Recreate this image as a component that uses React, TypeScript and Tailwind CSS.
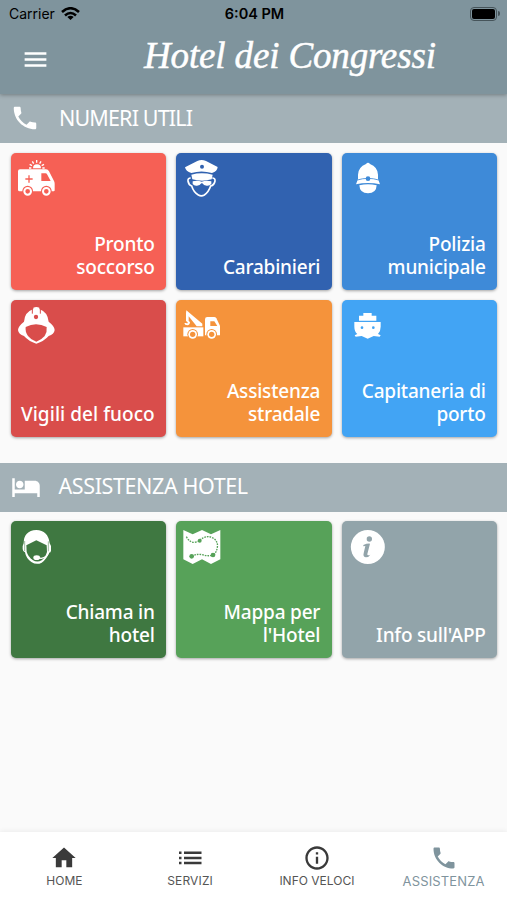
import type { ReactNode } from "react";
import { MdMenu, MdPhone, MdHotel, MdHome, MdInfoOutline } from "react-icons/md";

function CardIcon({ children }: { children: ReactNode }) {
  return (
    <svg viewBox="0 0 111 111" className="w-[37px] h-[37px] overflow-visible" fill="currentColor">
      {children}
    </svg>
  );
}

const AmbulanceIcon = ({ bg }: { bg: string }) => (
  <CardIcon>
    <path d="M45 25a12 12 0 0 1 24 0z" />
    <path d="M56 0v8M43 4l4 7M69 4l-4 7M35 13l7 4M78 13l-7 4M33 24h7M73 24h7" stroke="currentColor" strokeWidth="4" />
    <path d="M6 28H84q6 0 9 6l15 29q2 4 2 8v20q0 3-3 3H5q-5 0-5-5V34q0-6 6-6z" />
    <path d="M70 40h12q4 0 6 4l10 19H70z" fill={bg} />
    <path d="M33 46v22M22 57h22" stroke={bg} strokeWidth="4" />
    <circle cx="29" cy="93" r="16" fill={bg} /><circle cx="29" cy="94" r="10" fill="none" stroke="currentColor" strokeWidth="6" />
    <circle cx="85" cy="93" r="16" fill={bg} /><circle cx="85" cy="94" r="10" fill="none" stroke="currentColor" strokeWidth="6" />
  </CardIcon>
);

const OfficerIcon = ({ bg }: { bg: string }) => (
  <CardIcon>
    <path d="M6 22L43 3q13-6 26 0l35 18q-1 13-17 18Q55 30 25 39 8 34 6 22z" />
    <circle cx="57" cy="20" r="6" fill={bg} />
    <path d="M25 44q31-8 64 0l-3 14q-29 8-58 0z" />
    <path d="M23 54q-9 0-8 9 2 12 11 15 6 19 20 27 9 5 18 0 13-9 19-27 11-3 13-15 1-9-8-9" fill="none" stroke="currentColor" strokeWidth="5" />
    <path d="M29 64q14-4 27 1 14-5 29-1v8q-5 6-14 5-9 0-13-7h-3q-4 7-13 7-9 1-13-5z" />
  </CardIcon>
);

const PoliceHelmetIcon = ({ bg }: { bg: string }) => (
  <CardIcon>
    <path d="M51 12q6-8 12 0 23 9 24 32v13H27V44q1-23 24-32z" />
    <path d="M27 57h60l6 16q-36-8-72 0z" />
    <path d="M25 60q32-10 64 0" fill="none" stroke={bg} strokeWidth="2.500" />
    <circle cx="57" cy="56" r="7" fill={bg} />
    <path d="M31 76q26-6 52 0-1 24-26 24T31 76z" />
  </CardIcon>
);

const FirefighterIcon = ({ bg }: { bg: string }) => (
  <CardIcon>
    <path d="M18 44q2-29 28-38V2q9-4 18 0v4q25 9 28 38 18 14 18 25-2 14-18 18-14 16-37 23Q32 103 18 87 2 83 0 69q0-11 18-25z" />
    <path d="M23 60q31-16 63 0 2 14-6 27-10 12-25 17-16-5-25-17-9-13-7-27z" fill={bg} />
    <circle cx="54" cy="30" r="6.500" fill={bg} />
    <path d="M43 6v14M67 6v14" stroke={bg} strokeWidth="3" />
  </CardIcon>
);

const TowTruckIcon = ({ bg }: { bg: string }) => (
  <CardIcon>
    <path d="M10 10l48 40v8H41L17 28v14l4 3q0 9-8 10-8 0-9-7h5q6 3 5-2l-5-4V19z" />
    <path d="M1 61h60v27H1z" />
    <path d="M66 37q0-7 7-7h20q5 0 7 4l11 22v29h-6H66z" />
    <path d="M82 43h12l9 14H82z" fill={bg} />
    <circle cx="29" cy="82" r="16" fill={bg} /><circle cx="29" cy="82" r="13" />
    <circle cx="86" cy="82" r="16" fill={bg} /><circle cx="86" cy="82" r="13" />
    <circle cx="29" cy="82" r="8" fill={bg} /><circle cx="86" cy="82" r="8" fill={bg} />
  </CardIcon>
);

const ShipIcon = ({ bg }: { bg: string }) => (
  <CardIcon>
    <path d="M43 18h25v8h14v15H30V26h13z" />
    <path d="M16 45h79v14q0 14-8 22l8 4-3 4-18-2-18 8-18-8-18 2-3-4 8-4q-9-8-9-22z" />
    <circle cx="39" cy="62" r="4" fill={bg} /><circle cx="73" cy="62" r="4" fill={bg} />
  </CardIcon>
);

const HeadsetIcon = ({ bg }: { bg: string }) => (
  <CardIcon>
    <path d="M17 46q0-38 38-40 35 1 40 40l4 8v14q0 6-7 7-5 18-21 29-15 8-31-2-16-11-19-29-7-3-7-10V54z" />
    <path d="M25 52l30-15 31 15 1 20q-5 17-16 25-14 8-27-1-14-10-18-25z" fill={bg} />
    <path d="M92 74q-4 13-22 17l-9-1" fill="none" stroke="currentColor" strokeWidth="4" />
    <ellipse cx="56" cy="89" rx="10" ry="7" />
    <path d="M20 39v30M91 40v30" stroke={bg} strokeWidth="1.500" />
  </CardIcon>
);

const MapIcon = ({ bg }: { bg: string }) => (
  <CardIcon>
    <path d="M1 6l28 13L57 6l27 13L112 6v88l-28 14-27-14-28 14L1 94z" />
    <path d="M10 26q9 17 24 17 12-1 18-8 20-15 38-5 16 10 13 28-2 14-12 25" fill="none" stroke={bg} strokeWidth="4" strokeDasharray="5 3" />
    <path d="M26 84q19-8 36-3 14 4 26 1" fill="none" stroke={bg} strokeWidth="4" strokeDasharray="5 3" />
    <circle cx="50" cy="38" r="6" fill={bg} /><circle cx="26" cy="85" r="7" fill={bg} /><circle cx="90" cy="81" r="7" fill={bg} />
  </CardIcon>
);

const InfoIcon = ({ bg }: { bg: string }) => (
  <CardIcon>
    <circle cx="56.500" cy="57" r="51" />
    <circle cx="61" cy="33" r="8" fill={bg} />
    <path d="M43 51q12-5 20-4l-8 31q-1 6 9 2-5 8-13 8-10-1-7-12l5-22-6 1z" fill={bg} />
  </CardIcon>
);

const ListIcon = () => (
  <svg viewBox="0 0 28 28" className="w-7 h-7" fill="currentColor">
    <path d="M3 7.500h2.500V10H3zM3 12.700h2.500v2.500H3zM3 17.700h2.500v2.500H3zM8 7.500h17.500V10H8zM8 12.700h17.500v2.500H8zM8 17.700h17.500v2.500H8z" />
  </svg>
);

const emergency = [
  { label: "Pronto soccorso", bg: "#f66055", card: "bg-[#f66055]", Icon: AmbulanceIcon },
  { label: "Carabinieri", bg: "#3162b0", card: "bg-[#3162b0]", Icon: OfficerIcon },
  { label: "Polizia municipale", bg: "#3e8ad8", card: "bg-[#3e8ad8]", Icon: PoliceHelmetIcon },
  { label: "Vigili del fuoco", bg: "#d94d4b", card: "bg-[#d94d4b] tracking-[0.05px]", Icon: FirefighterIcon },
  { label: "Assistenza stradale", bg: "#f5933b", card: "bg-[#f5933b]", Icon: TowTruckIcon },
  { label: "Capitaneria di porto", bg: "#42a4f4", card: "bg-[#42a4f4]", Icon: ShipIcon },
];

const hotel = [
  { label: "Chiama in hotel", bg: "#3f7841", card: "bg-[#3f7841]", Icon: HeadsetIcon },
  { label: "Mappa per l'Hotel", bg: "#57a259", card: "bg-[#57a259]", Icon: MapIcon },
  { label: "Info sull'APP", bg: "#92a4aa", card: "bg-[#92a4aa]", Icon: InfoIcon },
];

function CardGrid({ items }: { items: typeof emergency }) {
  return (
    <div className="grid grid-cols-[155.5px_155.5px_155.5px] gap-[10px] px-[10.7px] tracking-[-0.2px]">
      {items.map(({ label, bg, card, Icon }) => (
        <div key={label} className={`flex flex-col justify-between h-[137px] rounded-[5px] p-[7px] pr-[11.500px] pb-[11px] shadow-[0_1px_3px_rgba(0,0,0,0.35)] ${card}`}>
          <Icon bg={bg} />
          <p className="self-end w-[136px] text-right text-[19px] leading-[23px] font-medium">{label}</p>
        </div>
      ))}
    </div>
  );
}

export default function App() {
  return (
    <div className="flex flex-col w-[507px] h-[900px] overflow-hidden bg-[#fafafa] text-white font-['Noto_Sans',sans-serif]">
      <header className="relative z-10 h-[94px] shrink-0 bg-[#7f949d] shadow-[0_1px_4px_rgba(0,0,0,0.3)]">
        <div className="grid grid-cols-3 items-center h-[27px] pl-[9px] pr-[7px] text-black font-['Inter',sans-serif]">
          <div className="flex items-center gap-[6px] text-[14px]">
            <span>Carrier</span>
            <svg viewBox="0 0 19 14" className="w-[19px] h-[14px]" fill="none" stroke="black" strokeWidth="2.600">
              <path d="M1 5q8.500-7.500 17 0M4 8.500q5.500-5 11 0" />
              <path d="M9.500 13L6.300 10q3.200-2.700 6.400 0z" fill="black" stroke="none" />
            </svg>
          </div>
          <span className="text-center text-[14.500px] font-semibold">6:04 PM</span>
          <div className="flex items-center justify-end gap-px">
            <div className="w-[27px] h-[14px] rounded-[4px] border border-[#46545a] p-px"><div className="h-full rounded-[2px] bg-black" /></div>
            <div className="w-[2px] h-[5px] rounded-r bg-[#46545a]" />
          </div>
        </div>
        <div className="flex items-center h-[61px] pl-[21px]">
          <MdMenu className="w-[29px] h-[29px] mt-[3px]" />
          <h1 className="ml-[94px] mt-[-5px] text-[37px] leading-none italic tracking-[-0.15px] whitespace-nowrap font-['Liberation_Serif',serif] [-webkit-text-stroke:0.5px_white]">Hotel dei Congressi</h1>
        </div>
      </header>

      <div className="flex items-center h-[48.500px] shrink-0 pl-[10px] bg-[#a3b1b7]">
        <MdPhone className="w-[30px] h-[30px]" />
        <h2 className="ml-[19px] mt-[-1px] text-[21.500px] tracking-[-0.850px]">NUMERI UTILI</h2>
      </div>
      <div className="pt-[10px] pb-[26px]"><CardGrid items={emergency} /></div>

      <div className="flex items-center h-[49px] shrink-0 pl-[10.500px] bg-[#a3b1b7]">
        <MdHotel className="w-[30px] h-[30px]" />
        <h2 className="ml-[18px] mt-[-2px] text-[21.500px] tracking-[-0.400px]">ASSISTENZA HOTEL</h2>
      </div>
      <div className="pt-[9.500px]"><CardGrid items={hotel} /></div>

      <nav className="grid grid-cols-4 h-[68px] mt-auto shrink-0 bg-white text-[#3a3a3a] text-[12px] font-['Inter',sans-serif] shadow-[0_-1px_5px_rgba(0,0,0,0.06)]">
        <div className="flex flex-col items-center pt-[12px] pl-[2px]"><MdHome className="w-7 h-7" /><span className="text-[#555555]">HOME</span></div>
        <div className="flex flex-col items-center pt-[12px]"><ListIcon /><span className="text-[#555555] tracking-[0.15px]">SERVIZI</span></div>
        <div className="flex flex-col items-center pt-[12px]"><MdInfoOutline className="w-7 h-7" /><span className="text-[#555555]">INFO VELOCI</span></div>
        <div className="flex flex-col items-center pt-[12px] text-[#7f949d]"><MdPhone className="w-7 h-7" /><span className="text-[13px] leading-[18px] tracking-[0.15px]">ASSISTENZA</span></div>
      </nav>
    </div>
  );
}
